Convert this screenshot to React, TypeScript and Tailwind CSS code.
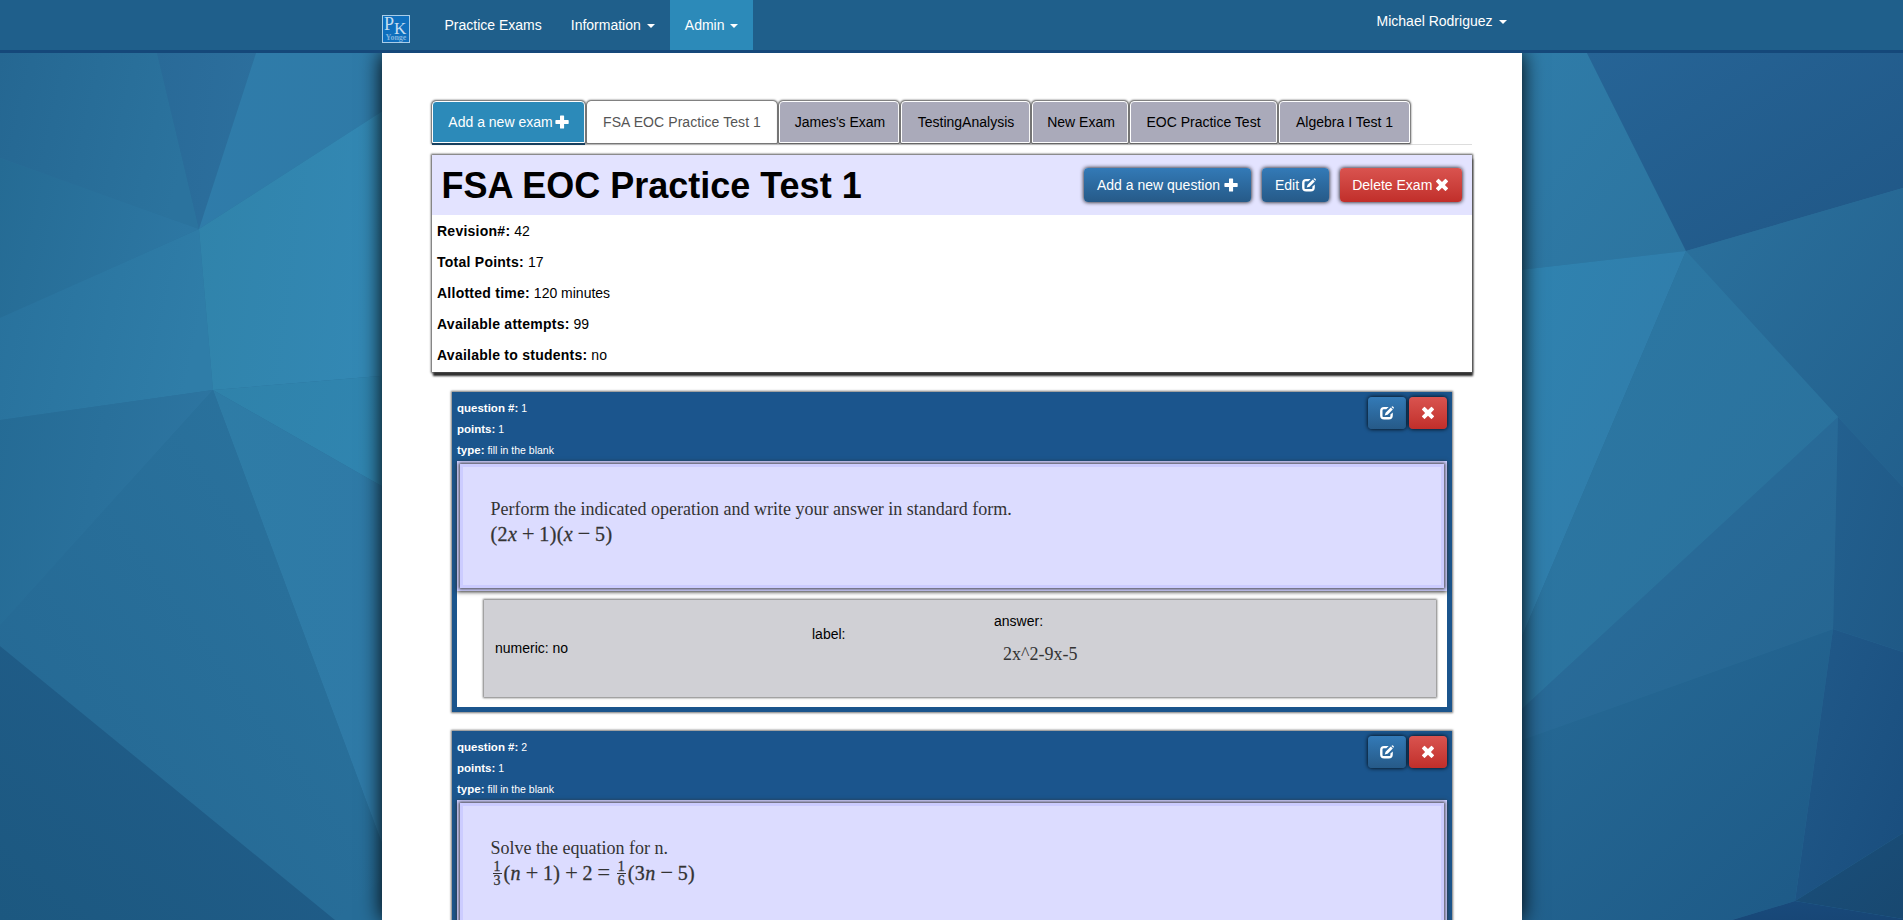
import type { ReactNode } from "react";

function Backdrop() {
  const facets: [string, string, string][] = [
    ["0,53 157,53 199,229 0,158", "#256792", "#2b739e"],
    ["157,53 256,53 199,229", "#296a98", "#2c6f9d"],
    ["256,53 392,53 392,105 199,229", "#2f7caa", "#2f7aa7"],
    ["0,158 199,229 0,318", "#256b94", "#2d77a3"],
    ["0,318 199,229 213,390 0,420", "#28719c", "#2f7da8"],
    ["199,229 392,105 392,375 213,390", "#3083aa", "#3388b4"],
    ["0,420 213,390 0,625", "#256b95", "#2d75a1"],
    ["213,390 392,375 392,492", "#2f82aa", "#3085b0"],
    ["213,390 392,492 392,870", "#2e7ca6", "#2f7aa7"],
    ["0,625 213,390 392,870 392,920 335,920 0,646", "#246792", "#2b749f"],
    ["0,646 335,920 0,920", "#1c5880", "#225f8d"],
    ["335,920 392,870 392,960", "#276d98", "#276d98"],
    ["1511,53 1587,53 1686,251 1511,271", "#2f7ca9", "#2c749f"],
    ["1587,53 1903,53 1903,188 1686,251", "#266496", "#205786"],
    ["1511,271 1686,251 1511,662", "#2f83b0", "#317aa8"],
    ["1686,251 1903,188 1903,487 1838,417", "#2b719d", "#22608d"],
    ["1686,251 1838,417 1511,719 1511,662", "#2d79a5", "#296f9a"],
    ["1838,417 1833,629 1511,744 1511,719", "#2b70a0", "#25648f"],
    ["1838,417 1903,487 1903,652 1833,629", "#23608f", "#1f5986"],
    ["1511,744 1833,629 1795,901 1732,920 1511,920", "#276b97", "#1d5986"],
    ["1833,629 1903,652 1903,833 1795,901", "#215a8a", "#194d7d"],
    ["1795,901 1903,833 1903,919", "#1a4f7b", "#184870"],
    ["1732,920 1795,901 1903,919 1903,920", "#194b7d", "#174574"],
  ];
  return (
    <svg className="absolute inset-0 -z-10" width="1903" height="920" viewBox="0 0 1903 920">
      <defs>
        {facets.map(([, from, to], i) => (
          <linearGradient key={i} id={`facet-${i}`} x1="0" y1={i === 9 || i === 10 ? "1" : "0"} x2="1" y2={i === 9 || i === 10 ? "0" : i > 11 ? "1" : "0.2"}>
            <stop offset="0" stopColor={from} />
            <stop offset="1" stopColor={to} />
          </linearGradient>
        ))}
      </defs>
      <rect width="1903" height="920" fill="#286e99" />
      {facets.map(([points], i) => (
        <polygon key={i} points={points} fill={`url(#facet-${i})`} />
      ))}
    </svg>
  );
}

function PlusIcon() {
  return (
    <svg className="inline-block size-3.5 shrink-0" viewBox="0 0 14 14" fill="currentColor">
      <path d="M5.6 .5h2.9q.6 0 .6.6v4h4q.6 0 .6.6v2.6q0 .6-.6.6h-4v4q0 .6-.6.6H5.6q-.6 0-.6-.6v-4H1q-.6 0-.6-.6V5.700q0-.6.6-.6h4v-4q0-.6.6-.6z" />
    </svg>
  );
}

function EditIcon() {
  return (
    <svg className="inline-block size-3.5 shrink-0" viewBox="0 0 14 14" fill="currentColor">
      <path d="M4.100 .9h4.600L6.300 3.200H3.800Q2.500 3.200 2.500 4.500v5.400q0 1.200 1.300 1.200h5.400q1.200 0 1.200-1.200V8.600l2.400-2.200v3q0 4.100-4.100 4.100H4.200Q.1 13.500 .1 9.400V5Q.1 .9 4.100 .9z" />
      <path d="M10.800 1.500l2 2-5.200 5.200-2.900.9.900-2.900zM11.400 .9l.6-.5q.5-.4 1 .1l.7.7q.5.500 0 1l-.4.600z" />
    </svg>
  );
}

function RemoveIcon() {
  return (
    <svg className="inline-block size-3.5 shrink-0" viewBox="0 0 14 14" fill="currentColor">
      <path d="M3.900 .9 7 4 10.100 .9q.400-.4.800 0l2 2q.4.4 0 .8L9.900 6.900l3 3.100q.4.400 0 .8l-2 2q-.4.400-.8 0L7 9.800l-3.100 3q-.4.400-.8 0l-2-2q-.4-.4 0-.8l3-3.100-3-3.200q-.4-.4 0-.8l2-2q.4-.4.800 0z" />
    </svg>
  );
}

function Caret() {
  return (
    <span className="ml-1.5 inline-block h-0 w-0 border-x-4 border-t-4 border-x-transparent border-t-white align-middle" />
  );
}

function Logo() {
  return (
    <svg className="mt-[15px] size-7 shrink-0" viewBox="0 0 28 28">
      <rect x=".5" y=".5" width="27" height="27" fill="#0f6fbd" stroke="#a9cde8" />
      <text fill="#c3dcf0" fontFamily="Liberation Serif, serif">
        <tspan x="2" y="15" fontSize="18">P</tspan>
        <tspan x="12" y="18.500" fontSize="17">K</tspan>
        <tspan x="3.500" y="25" fontSize="8" fontWeight="bold" fill="#7fb4de">Yonge</tspan>
      </text>
    </svg>
  );
}

function Navbar() {
  return (
    <nav className="relative z-10 h-[53px] border-b-[3px] border-[#15487a] bg-[#1f5f8b] text-white">
      <div className="mx-auto flex w-[1140px]">
        <Logo />
        <div className="ml-[20px] flex h-[50px] leading-5">
          <a className="p-[15px] pr-[14px]">Practice Exams</a>
          <a className="p-[15px]">Information<Caret /></a>
          <a className="bg-[#2c8ab9] p-[15px]">Admin<Caret /></a>
        </div>
        <a className="ml-auto px-[15px] py-[11px] leading-5">Michael Rodriguez<Caret /></a>
      </div>
    </nav>
  );
}

const tabBase =
  "mr-0.5 flex h-[42px] shrink-0 items-center justify-center rounded-t border border-white leading-5 whitespace-nowrap ";

function Tabs() {
  const exams = [
    ["James's Exam", "w-[120px] pl-0.5"],
    ["TestingAnalysis", "w-[129px] pl-px"],
    ["New Exam", "w-[96px] pl-0.5"],
    ["EOC Practice Test", "w-[147px]"],
    ["Algebra I Test 1", "w-[131px]"],
  ];
  return (
    <div className="flex h-11 border-b border-[#ddd] pl-[0.5px]">
      <a className={tabBase + "w-[153px] gap-[2px] bg-[#2c8ab9] text-white shadow-[0_2px_0_#17405f,0_0_2px_1px_#555]"}>
        Add a new exam
        <PlusIcon />
      </a>
      <a className={tabBase + "w-[190px] bg-white tracking-[0.08px] text-[#555] shadow-[0_1px_0_#777,0_0_2px_1px_#555]"}>
        FSA EOC Practice Test 1
      </a>
      {exams.map(([name, width]) => (
        <a key={name} className={tabBase + width + " bg-[#aaaaba] shadow-[0_1px_0_#666,0_0_2px_1px_#555]"}>
          {name}
        </a>
      ))}
    </div>
  );
}

const blueButton =
  "flex items-center justify-center rounded bg-linear-to-b from-[#337ab7] to-[#265a88] text-white shadow-[0_0_4px_#000] ";
const redButton =
  "flex items-center justify-center rounded bg-linear-to-b from-[#d9534f] to-[#c12e2a] text-white shadow-[0_0_4px_#000] ";

function Detail({ label, value }: { label: string; value: string }) {
  return (
    <p className="leading-[31px]">
      <b className="tracking-[0.25px]">{label}</b> {value}
    </p>
  );
}

function ExamSummary() {
  return (
    <section className="mt-2.5 h-[217px] bg-white shadow-[0_0_2px_1px_#555,1px_4px_2px_#222]">
      <header className="flex h-[60px] items-center bg-[#e3e3ff] px-2.5">
        <h1 className="mr-auto pt-px text-[36px] leading-[60px] font-bold">FSA EOC Practice Test 1</h1>
        <div className="flex gap-[11px]">
          <button className={blueButton + "h-[34px] w-[167px] gap-1"}>Add a new question<PlusIcon /></button>
          <button className={blueButton + "h-[34px] w-[67px] gap-[3px]"}>Edit<EditIcon /></button>
          <button className={redButton + "h-[34px] w-[121.5px] gap-[3px]"}>Delete Exam<RemoveIcon /></button>
        </div>
      </header>
      <div className="pt-px pl-[5.5px]">
        <Detail label="Revision#:" value="42" />
        <Detail label="Total Points:" value="17" />
        <Detail label="Allotted time:" value="120 minutes" />
        <Detail label="Available attempts:" value="99" />
        <Detail label="Available to students:" value="no" />
      </div>
    </section>
  );
}

function Meta({ label, value }: { label: string; value: string }) {
  return (
    <p className="h-[21px] text-[10.5px] leading-[21px]">
      <b className="text-[11.500px]">{label}</b> {value}
    </p>
  );
}

function QuestionCard({ number, prompt, math, children }: { number: string; prompt: string; math: ReactNode; children?: ReactNode }) {
  return (
    <article className="mx-5 mb-[19px] h-[320px] bg-[#1b558d] p-[5px] text-white shadow-[0_0_2px_1px_#777]">
      <div className="flex h-16 justify-between">
        <div className="pt-px pl-[0.5px]">
          <Meta label="question #:" value={number} />
          <Meta label="points:" value="1" />
          <Meta label="type:" value="fill in the blank" />
        </div>
        <div className="flex gap-[3px]">
          <button className={blueButton + "h-8 w-[38px]"}><EditIcon /></button>
          <button className={redButton + "h-8 w-[38px]"}><RemoveIcon /></button>
        </div>
      </div>
      <div className="h-[246px] bg-white">
        <div className="h-[130px] bg-[#ccccff] p-[3px] shadow-[0_1px_4px_#333]">
          <div className="h-[124px] border-[3px] border-[#ccccff] bg-[#dcdcff] pt-[29px] pl-7 font-['Liberation_Serif',serif] text-[#333] shadow-[0_0_3px_1px_#444]">
            <p className="text-[18px] leading-[26px]">{prompt}</p>
            <div className="flex h-6 items-center text-[20px] leading-6 tracking-[0.4px] whitespace-pre [-webkit-text-stroke:0.3px_#333]">{math}</div>
          </div>
        </div>
        {children}
      </div>
    </article>
  );
}

function Op({ children }: { children: string }) {
  return <span className="mx-[4.5px] text-[23px] leading-none tracking-normal [-webkit-text-stroke:0]">{children}</span>;
}

function Fraction({ top, bottom }: { top: string; bottom: string }) {
  return (
    <span className="mx-[2px] inline-flex w-[9px] flex-col items-center text-[14px] leading-[13px] tracking-normal">
      <span className="w-full border-b border-[#333] text-center">{top}</span>
      <span>{bottom}</span>
    </span>
  );
}

function AnswerBox() {
  return (
    <div className="mt-[9px] mr-[11px] ml-[27.5px] flex h-[97px] bg-[#d0d0d5] pl-[11px] text-black shadow-[0_0_2px_1px_#777]">
      <div className="w-[317px] pt-[38px] leading-5">numeric: no</div>
      <div className="w-[182px] pt-6 leading-5">label:</div>
      <div>
        <p className="pt-[11px] leading-5">answer:</p>
        <p className="pt-[10px] pl-[9px] font-['Liberation_Serif',serif] text-[18px] leading-[26px] text-[#333]">2x^2-9x-5</p>
      </div>
    </div>
  );
}

export default function App() {
  return (
    <div className="relative isolate h-[920px] w-[1903px] overflow-hidden font-['Liberation_Sans',sans-serif] text-[14px] text-black">
      <Backdrop />
      <Navbar />
      <main className="mx-auto h-[867px] w-[1140px] bg-white px-[50px] pt-12 shadow-[0_0_20px_#000]">
        <Tabs />
        <ExamSummary />
        <div className="pt-5">
          <QuestionCard
            number="1"
            prompt="Perform the indicated operation and write your answer in standard form."
            math={<span>(2<i>x</i><Op>+</Op>1)(<i>x</i><Op>−</Op>5)</span>}
          >
            <AnswerBox />
          </QuestionCard>
          <QuestionCard
            number="2"
            prompt="Solve the equation for n."
            math={
              <>
                <Fraction top="1" bottom="3" />
                <span>(<i>n</i><Op>+</Op>1)<Op>+</Op>2<Op>=</Op></span>
                <Fraction top="1" bottom="6" />
                <span>(3<i>n</i><Op>−</Op>5)</span>
              </>
            }
          />
        </div>
      </main>
    </div>
  );
}
